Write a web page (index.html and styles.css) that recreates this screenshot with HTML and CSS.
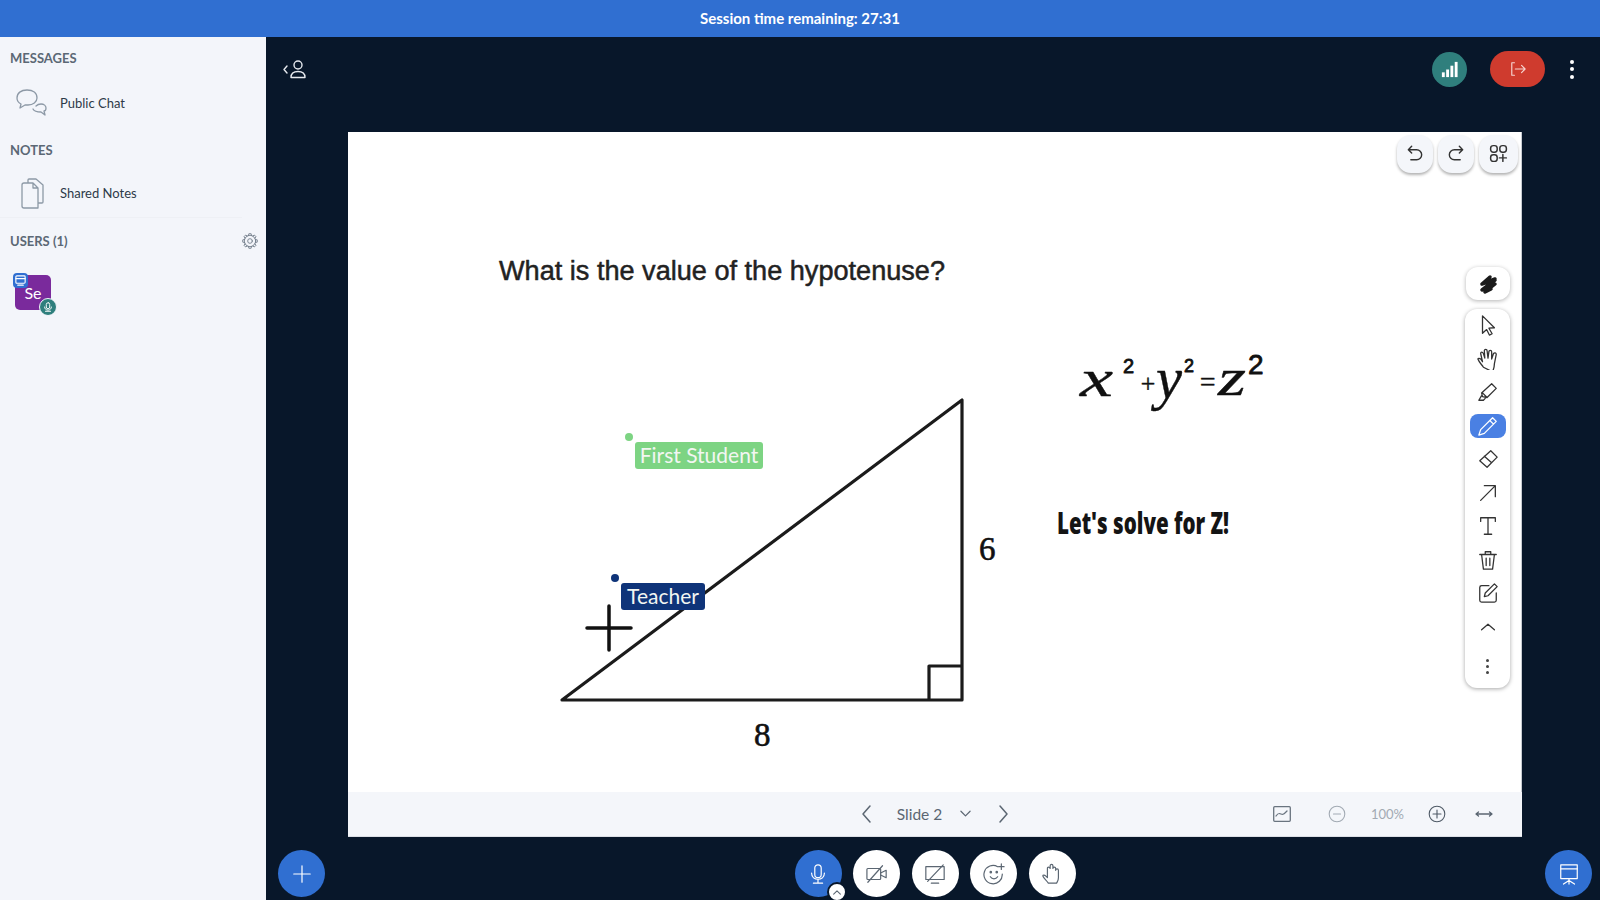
FILE: index.html
```html
<!DOCTYPE html>
<html lang="en">
<head>
    <meta charset="UTF-8">
    <title>Virtual Classroom</title>
    <link rel="stylesheet" href="styles.css">
</head>
<body>
    <div class="banner">Session time remaining: 27:31</div>

    <div class="layout">
        <!-- Left sidebar -->
        <aside class="sidebar">
            <h2 class="side-title title-messages">MESSAGES</h2>
            <div class="side-item item-chat">
                <svg class="side-icon" viewBox="0 0 32 32"><path d="M12 3c-6 0-10 3-10 8 0 3 2 5 4 6l-1 4 5-3h3c5 0 9-3 9-7 0-5-4-8-10-8zM21 19c1-1 3-2 5-2 3 0 5 2 5 4 0 2-1 3-2 3l1 4-4-3c-3 0-7-1-8-3"/></svg>
                <span>Public Chat</span>
            </div>
            <h2 class="side-title title-notes">NOTES</h2>
            <div class="side-item item-notes">
                <svg class="side-icon" viewBox="0 0 32 32"><path d="M9 6h9l5 5v20H9a2 2 0 0 1-2-2V8a2 2 0 0 1 2-2zM18 6v5h5M13 6V3a1 1 0 0 1 1-1h7l7 6v17a1 1 0 0 1-1 1h-4"/></svg>
                <span>Shared Notes</span>
            </div>
            <div class="users-head">
                <h2 class="side-title">USERS (1)</h2>
                <svg class="gear" viewBox="0 0 24 24">
                    <circle cx="12" cy="12" r="3.500"/>
                    <circle cx="12" cy="12" r="8.500"/>
                    <path d="M9.700 3.800L10.300 1.100h3.400l.6 2.700"/>
                    <path d="M9.700 3.800L10.300 1.100h3.400l.6 2.700" transform="rotate(45 12 12)"/>
                    <path d="M9.700 3.800L10.300 1.100h3.400l.6 2.700" transform="rotate(90 12 12)"/>
                    <path d="M9.700 3.800L10.300 1.100h3.400l.6 2.700" transform="rotate(135 12 12)"/>
                    <path d="M9.700 3.800L10.300 1.100h3.400l.6 2.700" transform="rotate(180 12 12)"/>
                    <path d="M9.700 3.800L10.300 1.100h3.400l.6 2.700" transform="rotate(225 12 12)"/>
                    <path d="M9.700 3.800L10.300 1.100h3.400l.6 2.700" transform="rotate(270 12 12)"/>
                    <path d="M9.700 3.800L10.300 1.100h3.400l.6 2.700" transform="rotate(315 12 12)"/>
                </svg>
            </div>
            <div class="user-row">
                <div class="avatar">
                    Se
                    <span class="presenter-badge">
                        <svg viewBox="0 0 14 14"><rect x="2" y="2" width="10" height="8" rx="1"/><path d="M2 5h10M4 12h6"/></svg>
                    </span>
                    <span class="mic-badge">
                        <svg viewBox="0 0 14 14"><rect x="5" y="2" width="4" height="7" rx="2"/><path d="M3 7c0 5 8 5 8 0M4 12h6"/></svg>
                    </span>
                </div>
            </div>
        </aside>

        <!-- Main area -->
        <main class="main">
            <header class="top-bar">
                <div class="users-toggle">
                    <svg viewBox="0 0 26 20"><path d="M5 7l-3 3.500L5 14"/><circle cx="16" cy="6" r="4"/><path d="M9 18.500c0-4 3-6 7-6s7 2 7 6z"/></svg>
                </div>
                <div class="top-actions">
                    <div class="signal-btn">
                        <svg viewBox="0 0 20 20"><rect x="2" y="13" width="3" height="5"/><rect x="6.500" y="10" width="3" height="8"/><rect x="11" y="6" width="3" height="12"/><rect x="15.500" y="2" width="3" height="16"/></svg>
                    </div>
                    <div class="leave-btn">
                        <svg viewBox="0 0 18 18"><path d="M5 2H2v14h3M6 9h11M13 5l4 4-4 4"/></svg>
                    </div>
                    <div class="more-btn"><i></i><i></i><i></i></div>
                </div>
            </header>

            <section class="slide">
                <svg class="drawing" viewBox="0 0 1174 660">
                    <text class="question" x="151" y="148" textLength="446" lengthAdjust="spacingAndGlyphs">What is the value of the hypotenuse?</text>
                    <path class="tri" d="M614 268V568H214ZM581 568V534H614"/>
                    <text class="side-len" x="631" y="428">6</text>
                    <text class="side-len" x="406" y="614">8</text>
                    <path class="cross" d="M239 496H283M261 474V518"/>
                    <text class="hand" x="732" y="264" font-size="52" textLength="33" lengthAdjust="spacingAndGlyphs">x</text>
                    <text class="hand hand-small" x="775" y="241" font-size="20">2</text>
                    <text class="hand" x="791" y="260" font-size="26">+</text>
                    <text class="hand" x="808" y="266" font-size="60" textLength="26" lengthAdjust="spacingAndGlyphs">y</text>
                    <text class="hand hand-small" x="836" y="240" font-size="18">2</text>
                    <text class="hand" x="850" y="259" font-size="28">=</text>
                    <text class="hand" x="870" y="263" font-size="52" textLength="28" lengthAdjust="spacingAndGlyphs">z</text>
                    <text class="hand hand-small" x="900" y="242" font-size="28">2</text>
                    <text class="solve" x="709" y="402" textLength="172" lengthAdjust="spacingAndGlyphs">Let's solve for Z!</text>
                </svg>

                <i class="cursor-dot dot-student"></i>
                <span class="cursor-label label-student">First Student</span>
                <i class="cursor-dot dot-teacher"></i>
                <span class="cursor-label label-teacher">Teacher</span>

                <div class="history-tools">
                    <div class="tool-btn tool-undo">
                        <svg viewBox="0 0 24 24"><path d="M8 4L4 8l4 4M4 8h10a6 6 0 0 1 0 12H7"/></svg>
                    </div>
                    <div class="tool-btn tool-redo">
                        <svg viewBox="0 0 24 24"><path d="M16 4l4 4-4 4M20 8H10a6 6 0 0 0 0 12h7"/></svg>
                    </div>
                    <div class="tool-btn tool-multi">
                        <svg viewBox="0 0 24 24"><rect x="3" y="3" width="7.500" height="7.500" rx="3"/><rect x="13.500" y="3" width="7.500" height="7.500" rx="3"/><rect x="3" y="13.500" width="7.500" height="7.500" rx="3"/><path d="M17 13v8M13 17h8"/></svg>
                    </div>
                </div>

                <div class="style-btn">
                    <svg viewBox="0 0 24 24"><path d="M6 12L14 5M6 12l13-5M6 18L19 8M9 20l10-8M9 20l6-3"/></svg>
                </div>

                <div class="tool-panel">
                    <div class="panel-icon">
                        <svg viewBox="0 0 24 24"><path d="M6 2l13 13-6 .5 3.500 6-3 1.500-3-6-4.500 4z"/></svg>
                    </div>
                    <div class="panel-icon">
                        <svg viewBox="0 0 24 24"><path d="M7 21c-2-3-5-6-6-9 0-1 2-1 3 0l2 3-2-9c0-2 2-2 3 0l1.500 5L8 3c0-2 3-2 3 0l1 8 1-7c0-2 3-2 3 0l0 8 2-6c1-1 3-1 3 1l-2 10c0 4-1 6-2 9z"/></svg>
                    </div>
                    <div class="panel-icon">
                        <svg viewBox="0 0 24 24"><path d="M16 3l5 5L11 18l-5-1-1-4zM6 13l5 5M5 16l-3 5h5l2-2"/></svg>
                    </div>
                    <div class="panel-icon panel-active">
                        <svg viewBox="0 0 24 24"><path d="M17 3l4 4L8 20l-6 2 2-6zM14 6l4 4"/></svg>
                    </div>
                    <div class="panel-icon">
                        <svg viewBox="0 0 24 24"><path d="M15 3l7 7-11 11-8-7zM8 9l8 7"/></svg>
                    </div>
                    <div class="panel-icon">
                        <svg viewBox="0 0 24 24"><path d="M4 20L20 4M8 4h12v12"/></svg>
                    </div>
                    <div class="panel-icon">
                        <svg viewBox="0 0 24 24"><path d="M4 7V3h16v4M12 3v18M8 21h8"/></svg>
                    </div>
                    <div class="panel-icon">
                        <svg viewBox="0 0 24 24"><path d="M3 6h18M9 6V3h6v3M5 6l2 16h10l2-16M10 10v8M14 10v8"/></svg>
                    </div>
                    <div class="panel-icon">
                        <svg viewBox="0 0 24 24"><path d="M13 4H5a2 2 0 0 0-2 2v14a2 2 0 0 0 2 2h14a2 2 0 0 0 2-2v-8M19 2l3 3-10 10-4 1 1-4z"/></svg>
                    </div>
                    <div class="panel-icon">
                        <svg viewBox="0 0 24 24"><path d="M5 15l7-6 7 6"/></svg>
                    </div>
                    <div class="panel-icon panel-dots"><i></i><i></i><i></i></div>
                </div>
            </section>

            <section class="slide-bar">
                <div class="slide-nav">
                    <svg class="nav-icon" viewBox="0 0 12 20"><path d="M9 2L2 10l7 8"/></svg>
                    <span class="slide-name">Slide 2</span>
                    <svg class="nav-down" viewBox="0 0 12 8"><path d="M1 1l5 5 5-5"/></svg>
                    <svg class="nav-icon" viewBox="0 0 12 20"><path d="M3 2l7 8-7 8"/></svg>
                </div>
                <div class="slide-zoom">
                    <svg class="zoom-chart" viewBox="0 0 18 16"><rect x=".7" y=".7" width="16.600" height="14.600" rx="1"/><path d="M3 10c2-3 3-3 5-2s3 0 6-3"/></svg>
                    <svg class="zoom-minus" viewBox="0 0 18 18"><circle cx="9" cy="9" r="7.800"/><path d="M5.500 9h7"/></svg>
                    <span class="zoom-value">100%</span>
                    <svg class="zoom-plus" viewBox="0 0 18 18"><circle cx="9" cy="9" r="7.800"/><path d="M5 9h8M9 5v8"/></svg>
                    <svg class="zoom-fit" viewBox="0 0 18 8"><path d="M2 4h14M3.500 2L1 4l2.500 2M14.500 2L17 4l-2.500 2"/></svg>
                </div>
            </section>

            <footer class="action-bar">
                <div class="action-left">
                    <div class="round-btn round-blue">
                        <svg viewBox="0 0 24 24"><path d="M12 3v18M3 12h18"/></svg>
                    </div>
                </div>
                <div class="action-center">
                    <div class="round-btn round-blue mic-btn">
                        <svg viewBox="0 0 24 24"><rect x="8.500" y="2" width="7" height="14" rx="3.500"/><path d="M5 11c0 9 14 9 14 0M12 18v3M7 22h10"/></svg>
                        <span class="mic-arrow"><svg viewBox="0 0 12 8"><path d="M2 6l4-4 4 4"/></svg></span>
                    </div>
                    <div class="round-btn">
                        <svg viewBox="0 0 24 24"><rect x="1" y="6" width="15" height="12" rx="1"/><path d="M16 11l6-3v8l-6-3M2 21L18 3"/></svg>
                    </div>
                    <div class="round-btn">
                        <svg viewBox="0 0 24 24"><rect x="2" y="4" width="20" height="14"/><path d="M4 20L21 2M8 22h8"/></svg>
                    </div>
                    <div class="round-btn">
                        <svg viewBox="0 0 24 24"><path d="M16 4a10 10 0 1 0 5 8M8 15c2 3 6 3 8 0M20 1v6M17 4h6"/><circle cx="8.500" cy="10" r=".8"/><circle cx="15" cy="10" r=".8"/></svg>
                    </div>
                    <div class="round-btn">
                        <svg viewBox="0 0 24 24"><path d="M8 22c-2-3-6-6-6-8 0-1 2-1 3 0l2 2V6c0-2 2-2 3 0V3c0-2 3-2 3 0v3c0-2 3-2 3 0v2c0-2 3-2 3 0v8c0 3-1 4-2 6z"/></svg>
                    </div>
                </div>
                <div class="action-right">
                    <div class="round-btn round-blue">
                        <svg viewBox="0 0 24 24"><rect x="3" y="2" width="18" height="15"/><path d="M3 6.500h18M12 17v2M6 23l6-4 6 4M12 19v4"/></svg>
                    </div>
                </div>
            </footer>
        </main>
    </div>
</body>
</html>
```

FILE: styles.css
```css
* {
    box-sizing: border-box;
}

html, body {
    height: 100%;
    margin: 0;
}

body {
    display: flex;
    flex-direction: column;
    overflow: hidden;
    font-family: Lato, "Noto Sans", Arial, sans-serif;
    background-color: #08172a;
}

svg {
    display: block;
    fill: none;
    stroke-linecap: round;
    stroke-linejoin: round;
}

.banner {
    height: 37px;
    flex-shrink: 0;
    display: flex;
    align-items: center;
    justify-content: center;
    padding-bottom: 2px;
    background-color: #306fd1;
    color: #fff;
    font-size: 15px;
    font-weight: 700;
}

.layout {
    flex: 1;
    display: flex;
    min-height: 0;
}

/* Sidebar */
.sidebar {
    width: 266px;
    flex-shrink: 0;
    background-color: #f3f5fa;
}

.side-title {
    margin: 0;
    padding-left: 10px;
    font-size: 13px;
    line-height: 18px;
    font-weight: 700;
    color: #5b6875;
}

.title-messages {
    margin-top: 12px;
}

.title-notes {
    margin-top: 14px;
}

.side-item {
    display: flex;
    align-items: center;
    padding-left: 15px;
    font-size: 13px;
    color: #2d3a48;
}

.side-item span {
    margin-left: 13px;
}

.item-chat {
    height: 48px;
    margin-top: 12px;
}

.item-notes {
    height: 50px;
    margin-top: 9px;
    margin-right: 24px;
    border-bottom: 1px solid #eef0f5;
}

.side-icon {
    width: 32px;
    height: 32px;
    stroke: #8d99a6;
    stroke-width: 1.300;
}

.users-head {
    display: flex;
    align-items: center;
    justify-content: space-between;
    padding: 14px 8px 0 0;
}

.gear {
    width: 16px;
    height: 16px;
    stroke: #6f7b88;
    stroke-width: 1.300;
}

.user-row {
    padding: 25px 0 0 15px;
}

.avatar {
    position: relative;
    width: 36px;
    height: 35px;
    display: flex;
    align-items: center;
    justify-content: center;
    border-radius: 5px;
    background-color: #7a2a9c;
    color: #fff;
    font-size: 16px;
}

.presenter-badge {
    position: absolute;
    left: -2px;
    top: -2px;
    width: 15px;
    height: 15px;
    padding: 1px;
    border-radius: 4px;
    background-color: #306fd1;
}

.presenter-badge svg {
    stroke: #fff;
    stroke-width: 1.200;
}

.mic-badge {
    position: absolute;
    right: -6px;
    bottom: -6px;
    width: 18px;
    height: 18px;
    padding: 2px;
    border: 1px solid #f3f5fa;
    border-radius: 50%;
    background-color: #2f7f7d;
}

.mic-badge svg {
    stroke: #fff;
    stroke-width: 1.100;
}

/* Main column */
.main {
    flex: 1;
    min-width: 0;
    display: flex;
    flex-direction: column;
}

.top-bar {
    height: 95px;
    flex-shrink: 0;
    display: flex;
    justify-content: space-between;
    align-items: flex-start;
    padding: 14px 26px 0 16px;
}

.users-toggle {
    width: 26px;
    height: 20px;
    margin-top: 8px;
}

.users-toggle svg {
    stroke: #e6e9ee;
    stroke-width: 1.400;
}

.top-actions {
    display: flex;
    align-items: center;
}

.signal-btn {
    width: 35px;
    height: 35px;
    padding: 8px;
    border-radius: 50%;
    background-color: #2f7f7d;
}

.signal-btn svg {
    fill: #fff;
}

.leave-btn {
    width: 55px;
    height: 36px;
    margin-left: 23px;
    display: flex;
    align-items: center;
    justify-content: center;
    border-radius: 18px;
    background-color: #cf3b2e;
}

.leave-btn svg {
    width: 16px;
    height: 16px;
    stroke: #f6d5d1;
    stroke-width: 1.300;
}

.more-btn {
    display: flex;
    flex-direction: column;
    gap: 3.500px;
    margin-left: 25px;
}

.more-btn i {
    width: 4px;
    height: 4px;
    border-radius: 50%;
    background-color: #fff;
}

/* Slide */
.slide {
    position: relative;
    width: 1174px;
    height: 660px;
    margin-left: 82px;
    flex-shrink: 0;
    background-color: #fff;
    border-right: 1px solid #c8ccd2;
}

.drawing {
    width: 1174px;
    height: 660px;
}

.question {
    font-family: "Liberation Sans", Arial, sans-serif;
    font-size: 27px;
    fill: #222;
    stroke: #222;
    stroke-width: .5;
}

.tri {
    stroke: #1b1b1b;
    stroke-width: 3.200;
}

.cross {
    stroke: #111;
    stroke-width: 3.500;
}

.side-len {
    font-family: "Liberation Serif", serif;
    font-size: 33px;
    fill: #111;
    stroke: #111;
    stroke-width: .6;
}

.hand {
    font-family: "Liberation Serif", serif;
    font-style: italic;
    fill: #111;
    stroke: #111;
    stroke-width: .4;
}

.hand-small {
    font-style: normal;
    font-family: "Liberation Sans", sans-serif;
    stroke-width: .8;
}

.solve {
    font-family: "Open Sans", sans-serif;
    font-size: 30px;
    font-weight: 800;
    fill: #141414;
}

.cursor-dot {
    position: absolute;
    width: 8px;
    height: 8px;
    border-radius: 50%;
}

.dot-student {
    left: 277px;
    top: 301px;
    background-color: #7dd483;
}

.dot-teacher {
    left: 263px;
    top: 442px;
    background-color: #0f3479;
}

.cursor-label {
    position: absolute;
    display: flex;
    align-items: center;
    justify-content: center;
    height: 27px;
    padding-bottom: 2px;
    border-radius: 3px;
    color: #f2f6f2;
    font-size: 21px;
}

.label-student {
    left: 287px;
    top: 310px;
    width: 128px;
    background-color: #7dd483;
}

.label-teacher {
    left: 273px;
    top: 451px;
    width: 84px;
    background-color: #0f3479;
}

.history-tools {
    position: absolute;
    top: 3px;
    right: 3px;
    display: flex;
    gap: 5px;
}

.tool-btn {
    width: 36px;
    height: 38px;
    padding: 8px;
    border-radius: 14px;
    background-color: #f4f6fa;
    box-shadow: 0 2px 3px rgba(0, 0, 0, .3);
}

.tool-multi {
    width: 39px;
    padding: 8px 9px;
}

.tool-btn svg {
    stroke: #333;
    stroke-width: 1.700;
}

.style-btn {
    position: absolute;
    top: 135px;
    left: 1118px;
    width: 44px;
    height: 33px;
    padding: 5px 10px;
    border-radius: 12px;
    background-color: #fff;
    box-shadow: 0 1px 4px rgba(0, 0, 0, .3);
}

.style-btn svg {
    stroke: #1b1b1b;
    stroke-width: 3.500;
}

.tool-panel {
    position: absolute;
    top: 177px;
    left: 1117px;
    width: 45px;
    height: 379px;
    display: flex;
    flex-direction: column;
    align-items: center;
    padding-top: 4px;
    border-radius: 12px;
    background-color: #fff;
    box-shadow: 0 1px 4px rgba(0, 0, 0, .35);
}

.panel-icon {
    width: 36px;
    height: 24px;
    margin-bottom: 9.500px;
    display: flex;
    align-items: center;
    justify-content: center;
    border-radius: 8px;
}

.panel-icon svg {
    width: 22px;
    height: 22px;
    stroke: #333;
    stroke-width: 1.400;
}

.panel-active {
    background-color: #4a80e3;
}

.panel-active svg {
    stroke: #fff;
}

.panel-dots {
    flex-direction: column;
    gap: 3px;
    margin-top: 6px;
}

.panel-dots i {
    width: 3px;
    height: 3px;
    border-radius: 50%;
    background-color: #444;
}

/* Bar under the slide */
.slide-bar {
    width: 1174px;
    height: 45px;
    margin-left: 82px;
    flex-shrink: 0;
    display: grid;
    grid-template-columns: 1fr auto 1fr;
    align-items: center;
    background-color: #f4f6fa;
    border-bottom: 1px solid #dcdfe5;
}

.slide-nav {
    grid-column: 2;
    display: flex;
    align-items: center;
    color: #5b6672;
}

.nav-icon {
    width: 12px;
    height: 20px;
    stroke: #5b6672;
    stroke-width: 1.500;
}

.slide-name {
    margin-left: 24px;
    font-size: 15.500px;
}

.nav-down {
    width: 11px;
    height: 8px;
    margin: 0 26px 0 18px;
    stroke: #5b6672;
    stroke-width: 1.300;
}

.slide-zoom {
    grid-column: 3;
    justify-self: end;
    display: flex;
    align-items: center;
    padding-right: 29px;
}

.zoom-chart {
    width: 18px;
    height: 16px;
    stroke: #69747f;
    stroke-width: 1.300;
}

.zoom-minus, .zoom-plus {
    width: 18px;
    height: 18px;
    stroke-width: 1.100;
}

.zoom-minus {
    margin-left: 37px;
    stroke: #a2aab3;
}

.zoom-plus {
    stroke: #4f5a66;
}

.zoom-value {
    width: 32px;
    margin: 0 25px;
    text-align: center;
    white-space: nowrap;
    font-size: 13px;
    color: #a2aab3;
}

.zoom-fit {
    width: 18px;
    height: 8px;
    margin-left: 29px;
    stroke: #5b6672;
    stroke-width: 1.300;
}

/* Bottom actions */
.action-bar {
    flex: 1;
    display: grid;
    grid-template-columns: 1fr auto 1fr;
    align-items: start;
    padding: 13px 8px 0 12px;
}

.action-center {
    display: flex;
    gap: 11.500px;
}

.action-right {
    justify-self: end;
}

.round-btn {
    position: relative;
    width: 47px;
    height: 47px;
    display: flex;
    align-items: center;
    justify-content: center;
    border-radius: 50%;
    background-color: #fff;
}

.round-btn > svg {
    width: 22px;
    height: 22px;
    stroke: #5b6672;
    stroke-width: 1.300;
}

.round-blue {
    background-color: #306fd1;
}

.round-blue > svg {
    stroke: #fff;
}

.mic-arrow {
    position: absolute;
    right: -5px;
    bottom: -5px;
    width: 20px;
    height: 20px;
    display: flex;
    align-items: center;
    justify-content: center;
    border: 2px solid #08172a;
    border-radius: 50%;
    background-color: #fff;
}

.mic-arrow svg {
    width: 10px;
    height: 7px;
    stroke: #5b6672;
    stroke-width: 1.300;
}
```
